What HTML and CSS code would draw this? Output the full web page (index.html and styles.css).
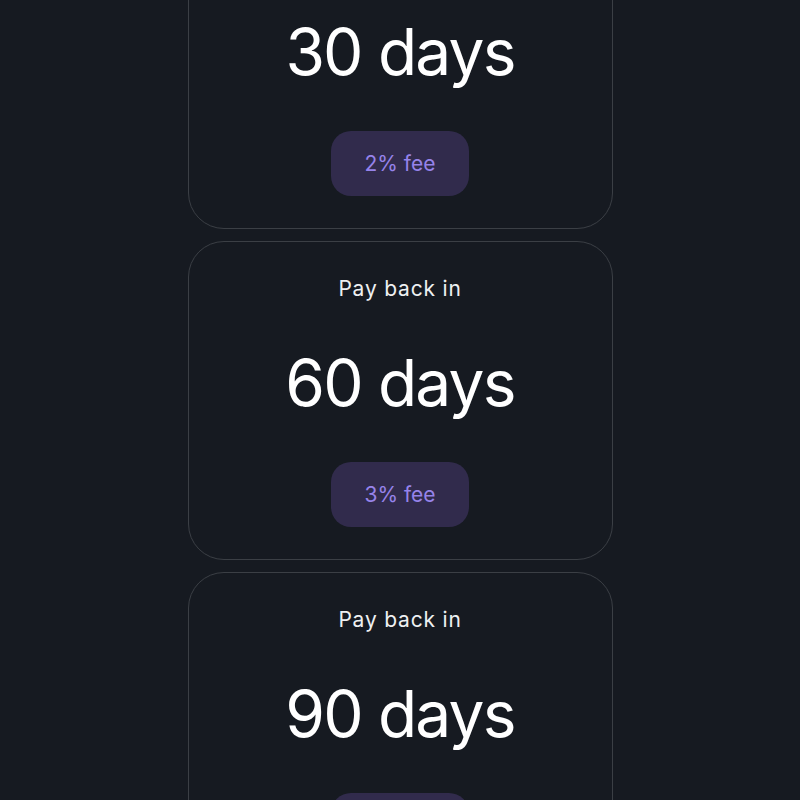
FILE: index.html
```html
<!DOCTYPE html>
<html>
<head>
<meta charset="utf-8">
<link rel="stylesheet" href="styles.css">
</head>
<body>
<div class="list">
  <div class="card">
    <div class="label">Pay back in</div>
    <div class="days">30 days</div>
    <div class="fee">2% fee</div>
  </div>
  <div class="card">
    <div class="label">Pay back in</div>
    <div class="days">60 days</div>
    <div class="fee">3% fee</div>
  </div>
  <div class="card">
    <div class="label">Pay back in</div>
    <div class="days">90 days</div>
    <div class="fee">4% fee</div>
  </div>
</div>
</body>
</html>
```

FILE: styles.css
```css
html, body {
  margin: 0;
  padding: 0;
  background: #161a21;
  height: 100%;
  overflow: hidden;
}
body {
  font-family: "Inter", "DejaVu Sans", sans-serif;
  color: #ffffff;
}
.list {
  display: flex;
  flex-direction: column;
  align-items: center;
  gap: 12px;
  margin-top: -90px;
}
.card {
  box-sizing: border-box;
  width: 425px;
  height: 319px;
  border: 1px solid #3b3f45;
  border-radius: 36px;
  padding: 32px 0 31px;
  display: flex;
  flex-direction: column;
  align-items: center;
}
.label {
  font-size: 21px;
  line-height: 30px;
  color: #eef0f2;
  letter-spacing: 0.8px;
}
.days {
  margin-top: 39px;
  font-size: 64px;
  line-height: 80px;
  letter-spacing: -1.8px;
  font-weight: 400;
}
.fee {
  margin-top: 39px;
  box-sizing: border-box;
  width: 138px;
  height: 65px;
  border-radius: 20px;
  background: #312b4c;
  color: #9683ea;
  font-size: 21px;
  display: flex;
  align-items: center;
  justify-content: center;
}
```
